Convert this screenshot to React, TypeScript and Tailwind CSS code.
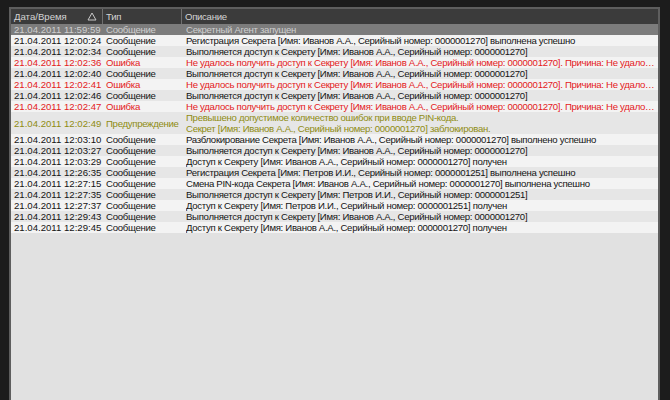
import React from "react";

type Kind = "info" | "error" | "warn";

interface LogRow {
  time: string;
  kind: Kind;
  text: string[];
}

const IVANOV = "[Имя: Иванов А.А., Серийный номер: 0000001270]";
const PETROV = "[Имя: Петров И.И., Серийный номер: 0000001251]";
const FAIL = `Не удалось получить доступ к Секрету ${IVANOV}. Причина: Не удалось проверить PIN-код`;

const rows: LogRow[] = [
  { time: "21.04.2011 11:59:59", kind: "info", text: ["Секретный Агент запущен"] },
  { time: "21.04.2011 12:00:24", kind: "info", text: [`Регистрация Секрета ${IVANOV} выполнена успешно`] },
  { time: "21.04.2011 12:02:34", kind: "info", text: [`Выполняется доступ к Секрету ${IVANOV}`] },
  { time: "21.04.2011 12:02:36", kind: "error", text: [FAIL] },
  { time: "21.04.2011 12:02:40", kind: "info", text: [`Выполняется доступ к Секрету ${IVANOV}`] },
  { time: "21.04.2011 12:02:41", kind: "error", text: [FAIL] },
  { time: "21.04.2011 12:02:46", kind: "info", text: [`Выполняется доступ к Секрету ${IVANOV}`] },
  { time: "21.04.2011 12:02:47", kind: "error", text: [FAIL] },
  {
    time: "21.04.2011 12:02:49",
    kind: "warn",
    text: ["Превышено допустимое количество ошибок при вводе PIN-кода.", `Секрет ${IVANOV} заблокирован.`],
  },
  { time: "21.04.2011 12:03:10", kind: "info", text: [`Разблокирование Секрета ${IVANOV} выполнено успешно`] },
  { time: "21.04.2011 12:03:27", kind: "info", text: [`Выполняется доступ к Секрету ${IVANOV}`] },
  { time: "21.04.2011 12:03:29", kind: "info", text: [`Доступ к Секрету ${IVANOV} получен`] },
  { time: "21.04.2011 12:26:35", kind: "info", text: [`Регистрация Секрета ${PETROV} выполнена успешно`] },
  { time: "21.04.2011 12:27:15", kind: "info", text: [`Смена PIN-кода Секрета ${IVANOV} выполнена успешно`] },
  { time: "21.04.2011 12:27:35", kind: "info", text: [`Выполняется доступ к Секрету ${PETROV}`] },
  { time: "21.04.2011 12:27:37", kind: "info", text: [`Доступ к Секрету ${PETROV} получен`] },
  { time: "21.04.2011 12:29:43", kind: "info", text: [`Выполняется доступ к Секрету ${IVANOV}`] },
  { time: "21.04.2011 12:29:45", kind: "info", text: [`Доступ к Секрету ${IVANOV} получен`] },
];

const kindLabel: Record<Kind, string> = {
  info: "Сообщение",
  error: "Ошибка",
  warn: "Предупреждение",
};

const kindColor: Record<Kind, string> = {
  info: "text-[#141414]",
  error: "text-[#e4201c]",
  warn: "text-[#8f8c12]",
};

function SortArrow() {
  return (
    <svg width="10" height="9" viewBox="0 0 10 9" className="shrink-0">
      <path d="M5 1 L9 8 L1 8 Z" fill="none" stroke="#c8c8c8" strokeWidth="1" />
    </svg>
  );
}

export default function App() {
  return (
    <div
      className="h-[400px] w-[670px] overflow-hidden bg-[#1c1c1c] pl-[9px] pr-[10px] pt-[7px] text-[9.6px] leading-[11px]"
      style={{ fontFamily: '"Liberation Sans", Arial, sans-serif' }}
    >
      <div className="flex h-[400px] flex-col border-x-2 border-t-2 border-[#5e5e5e] bg-[#e1e1e1]">
        {/* Header */}
        <div className="flex h-[15px] shrink-0 items-center bg-[#3b3b3b] text-[#d4d4d4]">
          <div className="flex h-full w-[92px] items-center justify-between border-r border-[#707070] pl-[3px] pr-[5px]">
            <span>Дата/Время</span>
            <SortArrow />
          </div>
          <div className="flex h-full w-[79px] items-center border-r border-[#707070] pl-[3px] tracking-[-0.3px]">
            Тип
          </div>
          <div className="flex h-full flex-1 items-center pl-[3px] tracking-[-0.3px]">Описание</div>
        </div>

        {/* Rows */}
        <div className="flex flex-col">
          {rows.map((r, i) => {
            const selected = i === 0;
            const bg = selected ? "bg-[#7c7c7c]" : i % 2 === 1 ? "bg-[#f3f3f3]" : "bg-[#e6e6e6]";
            const color = selected ? "text-[#cfcfcf]" : kindColor[r.kind];
            const multi = r.text.length > 1;
            return (
              <div key={r.time} className={`flex ${bg} ${color}`}>
                <div className={`flex w-[92px] shrink-0 pl-[3px] ${multi ? "items-center" : ""}`}>{r.time}</div>
                <div className={`flex w-[79px] shrink-0 pl-[3px] tracking-[-0.3px] ${multi ? "items-center" : ""}`}>
                  {kindLabel[r.kind]}
                </div>
                <div className="min-w-0 flex-1 pl-[4px] pr-[2px] tracking-[-0.3px]">
                  {r.text.map((t) => (
                    <div key={t} className="truncate">
                      {t}
                    </div>
                  ))}
                </div>
              </div>
            );
          })}
        </div>
      </div>
    </div>
  );
}
